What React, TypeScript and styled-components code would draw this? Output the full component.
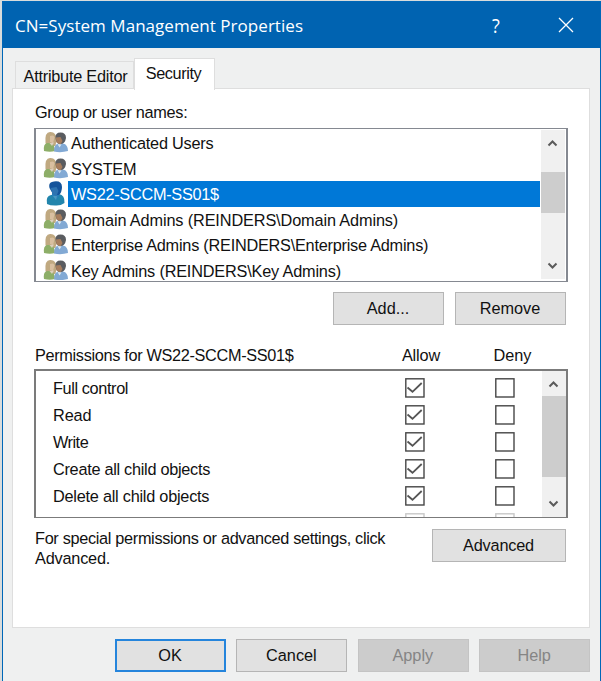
import React from "react";
import styled, { createGlobalStyle } from "styled-components";

const GlobalStyle = createGlobalStyle`
  * { box-sizing: border-box; }
  html, body { margin: 0; padding: 0; overflow: hidden; background: #d9dcdc; }
  body { font-family: "Liberation Sans", Arial, sans-serif; font-size: 16.3px; color: #111; }
`;

const Dialog = styled.main`
  width: 599px;
  height: 680px;
  margin: 1px 0 0 2px;
  background: #eff0f0;
  border: 1px solid #0067b8;
  border-bottom: 0;
  display: flex;
  flex-direction: column;
`;

const TitleBar = styled.header`
  height: 46px;
  flex: none;
  display: flex;
  align-items: center;
  background: #0063b1;
  color: #fff;
  font-family: "Open Sans", "Noto Sans", sans-serif;
  font-size: 17px;
  padding: 1px 25px 0 12px;
`;

const Title = styled.h1`
  flex: 1;
  margin: 0;
  font: inherit;
  letter-spacing: 0.04px;
  white-space: nowrap;
`;

const HelpMark = styled.span`
  font-size: 20px;
  font-weight: 400;
  transform: scaleX(0.9);
  width: 12px;
  text-align: center;
  margin-right: 55px;
`;

const CloseIcon = styled.svg`
  width: 18px;
  height: 18px;
  margin-top: -2px;
`;

const Tabs = styled.nav`
  height: 40px;
  flex: none;
  display: flex;
  align-items: flex-end;
  padding-left: 12px;
`;

const Tab = styled.div<{ $active?: boolean }>`
  width: ${(p) => (p.$active ? 81 : 119)}px;
  height: ${(p) => (p.$active ? 32 : 27)}px;
  margin-bottom: ${(p) => (p.$active ? -2 : 0)}px;
  padding: ${(p) => (p.$active ? "5px 2px 0 0" : "5px 0 0 2px")};
  line-height: 18px;
  text-align: center;
  white-space: nowrap;
  background: ${(p) => (p.$active ? "#fff" : "#eff0f0")};
  border: 1px solid #dedede;
  border-bottom: 0;
  z-index: ${(p) => (p.$active ? 1 : 0)};
`;

const Panel = styled.section`
  width: 578px;
  height: 540px;
  flex: none;
  margin-left: 9px;
  background: #fff;
  border: 1px solid #dedede;
  padding: 15px 20px 0 21px;
`;

const Label = styled.div`
  height: 24px;
  line-height: 17px;
  padding-left: 1px;
  white-space: nowrap;
`;

const Text = styled.span<{ $track?: number }>`
  letter-spacing: ${(p) => p.$track ?? 0}px;
  white-space: nowrap;
`;

const ListBox = styled.div`
  width: 534px;
  height: 154px;
  border: 2px solid #858991;
  border-top-width: 1px;
  border-bottom-width: 1px;
  padding: 1px 1px 2px 0;
  display: flex;
  justify-content: space-between;
  overflow: hidden;
`;

const Principals = styled.ul`
  width: 504px;
  height: 150px;
  margin: 0;
  padding: 0 0 0 7px;
  list-style: none;
  overflow: hidden;
`;

const Principal = styled.li`
  display: flex;
  height: 25.5px;
`;

const PrincipalIcon = styled.svg`
  width: 25px;
  height: 25px;
  flex: none;
`;

const PrincipalName = styled.div<{ $selected?: boolean }>`
  flex: 1;
  padding-left: 3px;
  line-height: 27px;
  background: ${(p) => (p.$selected ? "#0078d7" : "transparent")};
  color: ${(p) => (p.$selected ? "#fff" : "inherit")};
`;

const ScrollTrack = styled.div`
  width: 24px;
  flex: none;
  height: 100%;
  background: #f0f0f0;
  display: flex;
  flex-direction: column;
`;

const ScrollArrow = styled.svg`
  width: 24px;
  height: 25px;
  flex: none;
`;

const ScrollThumb = styled.div<{ $gap: number; $size: number }>`
  height: ${(p) => p.$size}px;
  margin: ${(p) => p.$gap}px 0 auto;
  flex: none;
  background: #cdcdcd;
`;

const Button = styled.button<{ $width?: number; $primary?: boolean }>`
  width: ${(p) => p.$width ?? 111}px;
  height: 33px;
  padding: 0 1px 1px 0;
  font: inherit;
  color: #111;
  background: #e1e1e1;
  border: ${(p) => (p.$primary ? "2px solid #2585dc" : "1px solid #b5b5b5")};
  border-radius: 0;
  &:disabled { background: #ccc; border-color: #c4c4c4; color: #858585; }
`;

const ListActions = styled.div`
  display: flex;
  justify-content: flex-end;
  gap: 11px;
  height: 64px;
  padding: 10px 3px 0 0;
`;

const PermissionHeader = styled.div`
  display: grid;
  grid-template-columns: 340px 92px 91px;
  height: 23px;
  line-height: 18px;
  white-space: nowrap;
  padding-left: 1px;
  & > :not(:first-child) { text-align: center; }
`;

const PermissionBox = styled.div`
  width: 534px;
  height: 149px;
  border: 2px solid #7b7b7b;
  border-bottom-width: 1px;
  display: flex;
  justify-content: space-between;
  overflow: hidden;
`;

const PermissionRows = styled.div`
  width: 500px;
  padding: 3px 0 0 17px;
  height: 146px;
  overflow: hidden;
`;

const PermissionRow = styled.div`
  display: grid;
  grid-template-columns: 352px 90px 20px;
  align-items: center;
  height: 27px;
  line-height: 26px;
`;

const CheckBox = styled.svg`
  width: 20px;
  height: 20px;
`;

const AdvancedRow = styled.div`
  display: flex;
  justify-content: space-between;
  padding: 11px 3px 0 1px;
`;

const Hint = styled.p`
  margin: -1px 0 0;
  line-height: 20px;
`;

const Footer = styled.footer`
  display: flex;
  gap: 10.4px;
  padding: 11px 0 0 112px;
`;

function GroupIcon() {
  return (
    <PrincipalIcon viewBox="0 0 25 25">
      <path d="M2.500 13Q1.500 1.500 7.500 2q6 0 6 8l-1 6H4z" fill="#c0a981" />
      <path d="M7 6q4-1.500 4.500 1.500L10 13l-3-1z" fill="#d9bfa0" />
      <path d="M1 21q-1-7 3-8h4q3.500 1 4 8-5 1.500-11 0z" fill="#8dae68" />
      <path d="M6.500 13l2.500 3 2-3.500z" fill="#ddcfbd" />
      <path d="M11 21.500q0-7 4-8h5q5 1 5 7.500-7 2-14 .5z" fill="#82a9d4" />
      <path d="M12.500 8Q12 2.500 17.500 2.500t5.500 5.500q-1 6-5.500 6t-5-6z" fill="#5a5c60" />
      <path d="M12.800 7.500l4.700-.5 2 4-2 3.500-4-2z" fill="#a77d5d" />
      <path d="M14.500 14l2 3.500 2-3z" fill="#dbe7ee" />
    </PrincipalIcon>
  );
}

function UserIcon() {
  return (
    <PrincipalIcon viewBox="0 0 25 25">
      <path d="M4 23Q2.500 15 8 14l8-1q6 1 5.500 9-4 3-9.500 2.500-5 0-8-1.500z" fill="#2285ac" />
      <path d="M9 12l6-1 1 4-3 4-4-4z" fill="#287fba" />
      <path d="M6.500 7Q5 1 11 .5q8-1 8 5.500 0 5-3 8-6 1-9.500-7z" fill="#14549b" />
      <path d="M7.500 7l6-1 2 4-2 5-4-2z" fill="#2d73b1" />
      <path d="M10 15l3 4 1-4" fill="#4b99c1" />
    </PrincipalIcon>
  );
}

function Arrow({ down = false }: { down?: boolean }) {
  return (
    <ScrollArrow viewBox="0 0 24 25">
      <path d={down ? "M7.500 9.500l4 4 4-4" : "M7.500 15.500l4-4 4 4"} fill="none" stroke="#5b5b5b" strokeWidth="2" />
    </ScrollArrow>
  );
}

function Scrollbar({ gap, size }: { gap: number; size: number }) {
  return (
    <ScrollTrack>
      <Arrow />
      <ScrollThumb $gap={gap} $size={size} />
      <Arrow down />
    </ScrollTrack>
  );
}

function Check({ checked = false, faded = false }: { checked?: boolean; faded?: boolean }) {
  return (
    <CheckBox viewBox="0 0 20 20">
      <rect x="0.8" y="0.8" width="18.2" height="18.2" fill="#fff" stroke={faded ? "#c8c8c8" : "#464646"} strokeWidth="1.4" />
      {checked && <path d="M2.500 9.500l5 4.300L16.700 5" fill="none" stroke="#555" strokeWidth="1.8" />}
    </CheckBox>
  );
}

const principals = [
  { name: "Authenticated Users", track: -0.22 },
  { name: "SYSTEM", track: -0.3 },
  { name: "WS22-SCCM-SS01$", track: -0.28, selected: true },
  { name: "Domain Admins (REINDERS\\Domain Admins)", track: -0.13 },
  { name: "Enterprise Admins (REINDERS\\Enterprise Admins)", track: -0.24 },
  { name: "Key Admins (REINDERS\\Key Admins)", track: -0.19 },
];

const permissions = [
  { name: "Full control", track: -0.38 },
  { name: "Read", track: -0.1 },
  { name: "Write", track: -0.5 },
  { name: "Create all child objects", track: -0.28 },
  { name: "Delete all child objects", track: -0.24 },
];

export default function App() {
  return (
    <>
      <GlobalStyle />
      <Dialog>
        <TitleBar>
          <Title>CN=System Management Properties</Title>
          <HelpMark>?</HelpMark>
          <CloseIcon viewBox="0 0 18 18"><path d="M2 2l14 14M16 2L2 16" stroke="#fff" strokeWidth="1.3" /></CloseIcon>
        </TitleBar>
        <Tabs>
          <Tab><Text $track={-0.24}>Attribute Editor</Text></Tab>
          <Tab $active><Text $track={-0.4}>Security</Text></Tab>
        </Tabs>
        <Panel>
          <Label><Text $track={-0.3}>Group or user names:</Text></Label>
          <ListBox>
            <Principals>
              {principals.map((p) => (
                <Principal key={p.name}>
                  {p.selected ? <UserIcon /> : <GroupIcon />}
                  <PrincipalName $selected={p.selected}><Text $track={p.track}>{p.name}</Text></PrincipalName>
                </Principal>
              ))}
            </Principals>
            <Scrollbar gap={17} size={41} />
          </ListBox>
          <ListActions>
            <Button>Add...</Button>
            <Button>Remove</Button>
          </ListActions>
          <PermissionHeader>
            <Text $track={-0.33}>Permissions for WS22-SCCM-SS01$</Text>
            <Text $track={-0.15}>Allow</Text>
            <Text>Deny</Text>
          </PermissionHeader>
          <PermissionBox>
            <PermissionRows>
              {permissions.map((p) => (
                <PermissionRow key={p.name}>
                  <Text $track={p.track}>{p.name}</Text>
                  <Check checked />
                  <Check />
                </PermissionRow>
              ))}
              <PermissionRow>
                <span />
                <Check faded />
                <Check faded />
              </PermissionRow>
            </PermissionRows>
            <Scrollbar gap={0} size={81} />
          </PermissionBox>
          <AdvancedRow>
            <Hint>
              <Text $track={-0.32}>For special permissions or advanced settings, click</Text>
              <br />
              <Text $track={-0.2}>Advanced.</Text>
            </Hint>
            <Button $width={134}><Text $track={-0.2}>Advanced</Text></Button>
          </AdvancedRow>
        </Panel>
        <Footer>
          <Button $primary>OK</Button>
          <Button>Cancel</Button>
          <Button disabled>Apply</Button>
          <Button disabled>Help</Button>
        </Footer>
      </Dialog>
    </>
  );
}
